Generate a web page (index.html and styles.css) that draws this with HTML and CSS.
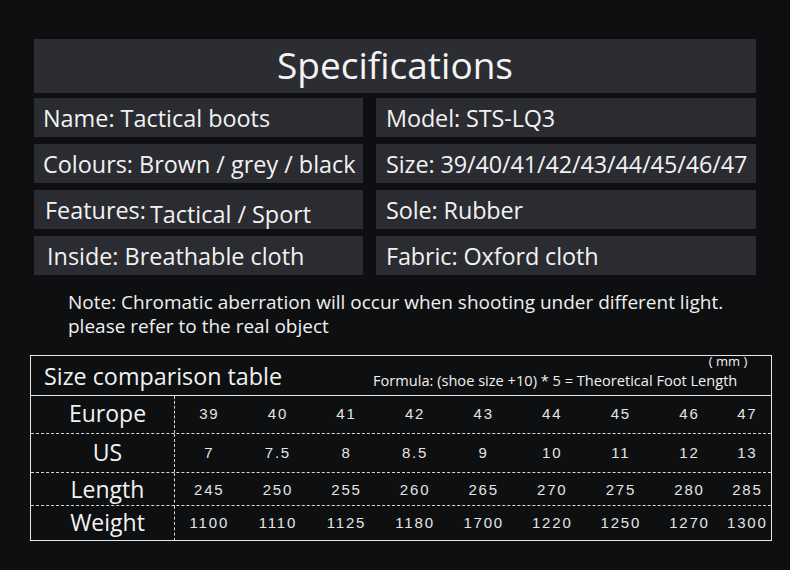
FILE: index.html
```html
<!DOCTYPE html>
<html lang="en">
<head>
<meta charset="utf-8">
<title>Specifications</title>
<link rel="stylesheet" href="styles.css">
</head>
<body>
<div class="page">
  <div class="title">Specifications</div>
  <div class="specs">
    <div class="cell">Name: Tactical boots</div>
    <div class="cell r">Model: STS-LQ3</div>
    <div class="cell">Colours: Brown / grey / black</div>
    <div class="cell r">Size: 39/40/41/42/43/44/45/46/47</div>
    <div class="cell feat"><span class="k">Features:</span><span class="v">Tactical / Sport</span></div>
    <div class="cell r">Sole: Rubber</div>
    <div class="cell ins">Inside: Breathable cloth</div>
    <div class="cell r">Fabric: Oxford cloth</div>
  </div>
  <div class="note">Note: Chromatic aberration will occur when shooting under different light.<br>please refer to the real object</div>
  <div class="table">
    <div class="thead">
      <div class="ttitle">Size comparison table</div>
      <div class="formula"><span class="ftext">Formula: (shoe size +10) * 5 = Theoretical Foot Length</span><span class="mm">( mm )</span></div>
    </div>
    <div class="trow first">
      <div class="lbl">Europe</div>
      <div class="n">39</div><div class="n">40</div><div class="n">41</div><div class="n">42</div><div class="n">43</div><div class="n">44</div><div class="n">45</div><div class="n">46</div><div class="n">47</div>
    </div>
    <div class="trow">
      <div class="lbl">US</div>
      <div class="n">7</div><div class="n">7.5</div><div class="n">8</div><div class="n">8.5</div><div class="n">9</div><div class="n">10</div><div class="n">11</div><div class="n">12</div><div class="n">13</div>
    </div>
    <div class="trow short">
      <div class="lbl">Length</div>
      <div class="n">245</div><div class="n">250</div><div class="n">255</div><div class="n">260</div><div class="n">265</div><div class="n">270</div><div class="n">275</div><div class="n">280</div><div class="n">285</div>
    </div>
    <div class="trow last">
      <div class="lbl">Weight</div>
      <div class="n">1100</div><div class="n">1110</div><div class="n">1125</div><div class="n">1180</div><div class="n">1700</div><div class="n">1220</div><div class="n">1250</div><div class="n">1270</div><div class="n">1300</div>
    </div>
  </div>
</div>
</body>
</html>
```
FILE: styles.css
```css
html, body {
  margin: 0;
  padding: 0;
}
body {
  width: 790px;
  height: 570px;
  overflow: hidden;
  background: #0e0f11;
  color: #f2f2f2;
  font-family: "Open Sans", "Noto Sans", sans-serif;
}
.page {
  padding: 39px 0 0 0;
  display: flex;
  flex-direction: column;
}
.title {
  margin-left: 34px;
  width: 722px;
  height: 54px;
  background: #2c2d33;
  text-align: center;
  font-size: 37px;
  line-height: 52px;
  color: #f4f4f4;
}
.specs {
  margin: 5px 0 0 34px;
  display: grid;
  grid-template-columns: 329px 380px;
  grid-auto-rows: 39px;
  column-gap: 13px;
  row-gap: 7px;
}
.cell {
  background: #2b2c32;
  font-size: 23.4px;
  line-height: 40px;
  padding-left: 9px;
  white-space: nowrap;
  overflow: hidden;
}
.cell.r {
  padding-left: 10px;
  letter-spacing: -0.1px;
}
.cell.ins {
  padding-left: 13px;
}
.feat .k {
  margin-left: 2px;
  margin-right: 4px;
  vertical-align: 2px;
}
.feat .v {
  vertical-align: -2px;
}
.note {
  margin: 15px 0 0 68px;
  font-size: 19px;
  line-height: 24px;
  color: #f0f0f0;
}
.table {
  margin: 17px 0 0 30px;
  width: 740px;
  border: 1px solid #e6e6e6;
}
.thead {
  height: 39px;
  border-bottom: 1px solid #e6e6e6;
  display: flex;
  align-items: center;
}
.ttitle {
  padding-left: 13px;
  font-size: 23.3px;
  width: 329px;
}
.formula {
  position: relative;
  font-size: 14.6px;
  padding-top: 8px;
  white-space: nowrap;
}
.ftext {
  display: inline-block;
  line-height: 16px;
}
.mm {
  position: absolute;
  right: -10px;
  top: -7px;
  font-size: 13px;
  line-height: 13px;
}
.trow {
  display: grid;
  grid-template-columns: 144px repeat(8, 68.6px) 1fr;
  height: 38px;
  border-bottom: 1px dashed #d8d8d8;
  align-items: center;
}
.trow.first {
  height: 37px;
}
.trow.short {
  height: 32px;
}
.trow.last {
  height: 34px;
  border-bottom: none;
}
.lbl {
  height: 100%;
  display: flex;
  align-items: center;
  justify-content: center;
  padding: 0 0 3px 10px;
  box-sizing: border-box;
  font-size: 23px;
  border-right: 1px dashed #d8d8d8;
}
.n {
  text-align: center;
  font-family: "Liberation Sans", Arial, sans-serif;
  font-size: 15px;
  letter-spacing: 1.8px;
  color: #e4e4e4;
  padding-bottom: 2px;
}
```
